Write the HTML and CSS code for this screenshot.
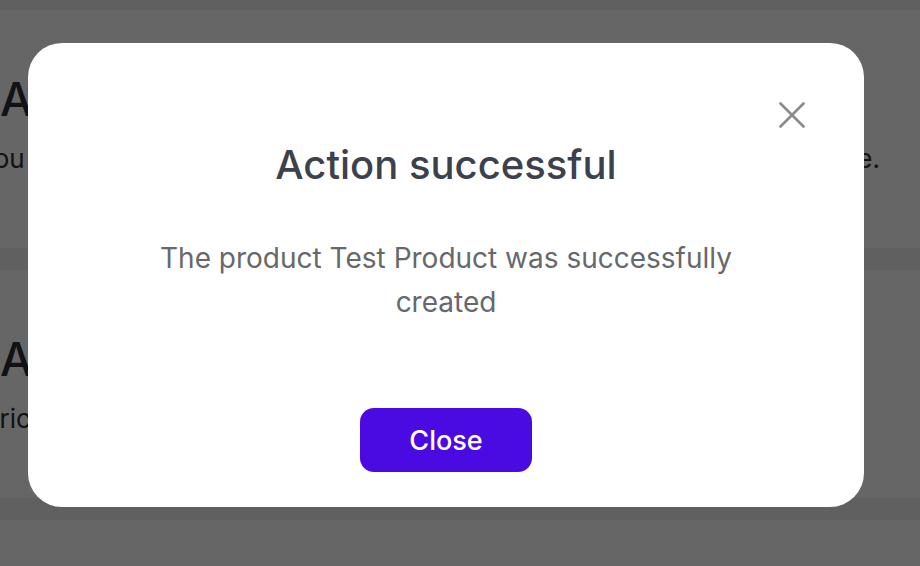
FILE: index.html
```html
<!DOCTYPE html>
<html lang="en">
<head>
<meta charset="utf-8">
<title>Action successful</title>
<link rel="stylesheet" href="styles.css">
</head>
<body>
<div class="page">
  <section class="card card-first">
    <h2 class="card-title">Add product</h2>
    <p class="card-text"><span class="cut">You can add a new product to your store here.</span></p>
  </section>
  <section class="card card-second">
    <h2 class="card-title">All products</h2>
    <p class="card-text"><span class="cut2">Prices and stock of every product</span></p>
  </section>
  <section class="card card-third"></section>
</div>

<div class="overlay">
  <div class="modal" role="dialog" aria-labelledby="modal-title">
    <button class="modal-close" aria-label="Close">
      <svg width="26" height="26" viewBox="0 0 26 26" fill="none">
        <path d="M1.5 1.5 L24.5 24.5 M24.5 1.5 L1.5 24.5" stroke="#8a8a8a" stroke-width="2.6" stroke-linecap="round"/>
      </svg>
    </button>
    <h1 class="modal-title" id="modal-title">Action successful</h1>
    <p class="modal-text">The product Test Product was successfully created</p>
    <button class="modal-button">Close</button>
  </div>
</div>
</body>
</html>
```

FILE: styles.css
```css
* { box-sizing: border-box; }

html, body {
  margin: 0;
  padding: 0;
  width: 920px;
  height: 566px;
  overflow: hidden;
}

body {
  font-family: Inter, "Noto Sans", "Liberation Sans", sans-serif;
  background: #f0f0f0;
}

.page {
  display: flex;
  flex-direction: column;
  padding-top: 10px;
  gap: 22px;
}

.card {
  background: #ffffff;
  overflow: hidden;
}

.card-first { height: 238px; padding-top: 61px; }
.card-second { height: 228px; padding-top: 61px; }
.card-third { height: 60px; }

.card-title {
  margin: 0;
  font-size: 46px;
  font-weight: 500;
  line-height: 56px;
  color: #2b2d36;
  white-space: nowrap;
}

.card-text {
  margin: 14px 0 0;
  font-size: 26px;
  line-height: 36px;
  color: #2b2d36;
  white-space: nowrap;
}

.cut {
  display: block;
  margin-left: -22px;
  width: 902px;
  text-align: justify;
  text-align-last: justify;
}

.cut2 {
  display: block;
  margin-left: -17px;
}

.overlay {
  position: fixed;
  inset: 0;
  background: rgba(0, 0, 0, 0.6);
  display: flex;
  padding: 43px 56px 59px 28px;
}

.modal {
  position: relative;
  width: 836px;
  height: 464px;
  background: #ffffff;
  border-radius: 34px;
  display: flex;
  flex-direction: column;
  align-items: center;
  padding-top: 98px;
}

.modal-close {
  position: absolute;
  top: 59px;
  right: 59px;
  width: 26px;
  height: 26px;
  padding: 0;
  border: 0;
  background: transparent;
  display: flex;
}

.modal-title {
  margin: 0;
  font-size: 40px;
  line-height: 48px;
  font-weight: 500;
  color: #3d414d;
}

.modal-text {
  margin: 47px 0 0;
  max-width: 620px;
  font-size: 28px;
  line-height: 44px;
  color: #67686b;
  text-align: center;
}

.modal-button {
  margin-top: 84px;
  width: 172px;
  height: 64px;
  border: 0;
  border-radius: 14px;
  background: #4a0be3;
  color: #ffffff;
  font-family: Inter, "Noto Sans", "Liberation Sans", sans-serif;
  font-size: 27px;
  font-weight: 500;
}
```
